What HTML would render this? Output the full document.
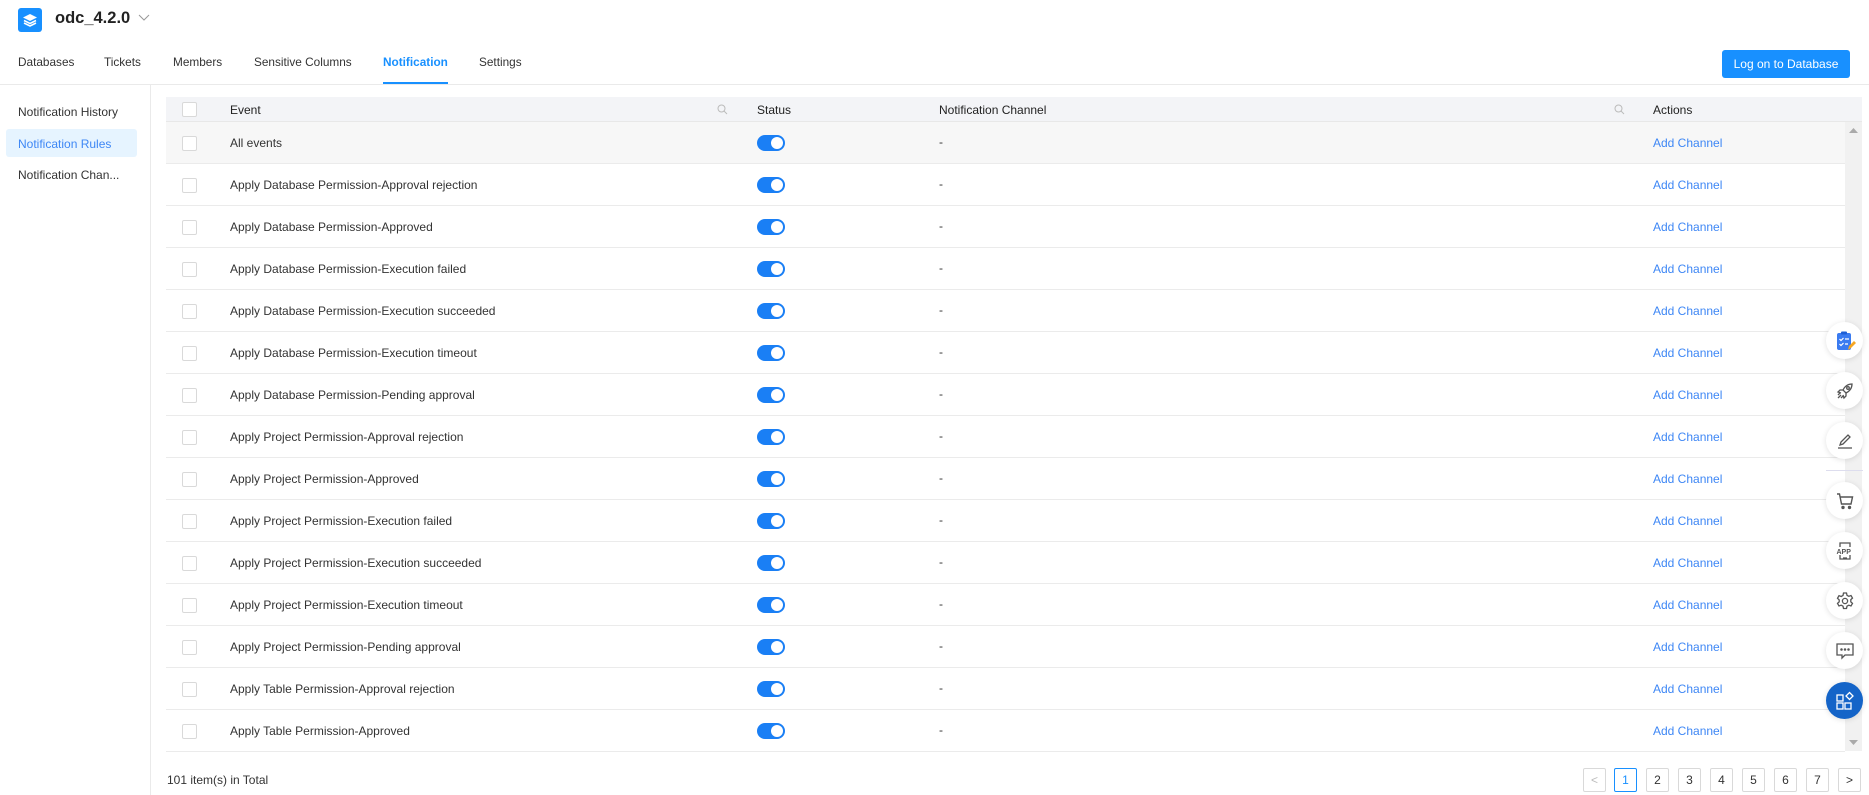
<!DOCTYPE html>
<html><head><meta charset="utf-8">
<style>
*{box-sizing:border-box;margin:0;padding:0}
body{width:1869px;height:795px;overflow:hidden;background:#fff;font-family:"Liberation Sans",sans-serif;font-size:12px;color:#333;position:relative}
.a{position:absolute;white-space:nowrap}
.tab{position:absolute;top:55px;font-size:11.8px;color:#333}
.row{position:absolute;left:166px;width:1679px;height:42px;border-bottom:1px solid #ebebeb}
.cb{position:absolute;left:16px;top:14px;width:15px;height:15px;border:1px solid #d9d9d9;border-radius:2px;background:#fff}
.ev{position:absolute;left:64px;top:14px}
.tg{position:absolute;left:591px;top:13px;width:28px;height:16px;border-radius:8px;background:#1a7ff5}
.tg:after{content:"";position:absolute;right:2px;top:2px;width:12px;height:12px;border-radius:50%;background:#fff}
.dash{position:absolute;left:773px;top:13px}
.ac{position:absolute;left:1487px;top:14px;color:#3e87f5}
.pg{position:absolute;top:768px;width:23px;height:24px;border:1px solid #d9d9d9;border-radius:2px;text-align:center;line-height:22px;font-size:12px;color:#333;background:#fff}
.fb{position:absolute;left:1826px;width:37px;height:37px;border-radius:50%;background:#fff;box-shadow:0 1px 6px rgba(0,0,0,.12);display:flex;align-items:center;justify-content:center}
</style></head><body>
<div class="a" style="left:18px;top:8px;width:24px;height:24px;background:#1890ff;border-radius:3px"></div>
<svg class="a" style="left:22px;top:13px" width="16" height="14" viewBox="0 0 16 14"><path d="M8 1L15 4.5 8 8 1 4.5Z" fill="#fff"/><path d="M2 7.5L8 10.5 14 7.5" stroke="#fff" stroke-width="1.6" fill="none"/><path d="M2 10L8 13 14 10" stroke="#fff" stroke-width="1.6" fill="none"/></svg>
<div class="a" style="left:55px;top:9px;font-size:16.5px;font-weight:bold;color:#222">odc_4.2.0</div>
<svg class="a" style="left:138px;top:14px" width="12" height="8"><path d="M1 1L6 6 11 1" stroke="#999" fill="none"/></svg>
<div class="tab" style="left:18px">Databases</div>
<div class="tab" style="left:104px">Tickets</div>
<div class="tab" style="left:173px">Members</div>
<div class="tab" style="left:254px">Sensitive Columns</div>
<div class="tab" style="left:383px;color:#1890ff;font-weight:bold">Notification</div>
<div class="tab" style="left:479px">Settings</div>
<div class="a" style="left:383px;top:82px;width:65px;height:2px;background:#1890ff"></div>
<div class="a" style="left:0;top:84px;width:1869px;height:1px;background:#eaeaea"></div>
<div class="a" style="left:1722px;top:50px;width:128px;height:28px;background:#1890ff;border-radius:3px;color:#fff;font-size:12px;text-align:center;line-height:28px">Log on to Database</div>
<div class="a" style="left:150px;top:85px;width:1px;height:710px;background:#eaeaea"></div>
<div class="a" style="left:18px;top:105px">Notification History</div>
<div class="a" style="left:6px;top:129px;width:131px;height:28px;background:#e6f4ff;border-radius:3px"></div>
<div class="a" style="left:18px;top:137px;color:#3e87f5">Notification Rules</div>
<div class="a" style="left:18px;top:168px">Notification Chan...</div>
<div class="a" style="left:166px;top:97px;width:1696px;height:25px;background:#f3f4f7;border-bottom:1px solid #e8e8e8"></div>
<div class="a" style="left:182px;top:102px;width:15px;height:15px;border:1px solid #d9d9d9;border-radius:2px;background:#fff"></div>
<div class="a" style="left:230px;top:103px;color:#222">Event</div>
<svg class="a" style="left:717px;top:104px" width="11" height="11"><circle cx="4.5" cy="4.5" r="3.5" stroke="#bbb" fill="none"/><path d="M7 7L10 10" stroke="#bbb"/></svg>
<div class="a" style="left:757px;top:103px;color:#222">Status</div>
<div class="a" style="left:939px;top:103px;color:#222">Notification Channel</div>
<svg class="a" style="left:1614px;top:104px" width="11" height="11"><circle cx="4.5" cy="4.5" r="3.5" stroke="#bbb" fill="none"/><path d="M7 7L10 10" stroke="#bbb"/></svg>
<div class="a" style="left:1653px;top:103px;color:#222">Actions</div>
<div class="a" style="left:1845px;top:122px;width:17px;height:629px;background:#f1f1f1"></div>
<svg class="a" style="left:1849px;top:128px" width="9" height="6"><path d="M0 5L4.5 0 9 5Z" fill="#aaa"/></svg>
<svg class="a" style="left:1849px;top:740px" width="9" height="6"><path d="M0 0L4.5 5 9 0Z" fill="#aaa"/></svg>
<div class="row" style="top:122px;background:#f7f7f7"><div class="cb"></div><div class="ev">All events</div><div class="tg"></div><div class="dash">-</div><div class="ac">Add Channel</div></div>
<div class="row" style="top:164px"><div class="cb"></div><div class="ev">Apply Database Permission-Approval rejection</div><div class="tg"></div><div class="dash">-</div><div class="ac">Add Channel</div></div>
<div class="row" style="top:206px"><div class="cb"></div><div class="ev">Apply Database Permission-Approved</div><div class="tg"></div><div class="dash">-</div><div class="ac">Add Channel</div></div>
<div class="row" style="top:248px"><div class="cb"></div><div class="ev">Apply Database Permission-Execution failed</div><div class="tg"></div><div class="dash">-</div><div class="ac">Add Channel</div></div>
<div class="row" style="top:290px"><div class="cb"></div><div class="ev">Apply Database Permission-Execution succeeded</div><div class="tg"></div><div class="dash">-</div><div class="ac">Add Channel</div></div>
<div class="row" style="top:332px"><div class="cb"></div><div class="ev">Apply Database Permission-Execution timeout</div><div class="tg"></div><div class="dash">-</div><div class="ac">Add Channel</div></div>
<div class="row" style="top:374px"><div class="cb"></div><div class="ev">Apply Database Permission-Pending approval</div><div class="tg"></div><div class="dash">-</div><div class="ac">Add Channel</div></div>
<div class="row" style="top:416px"><div class="cb"></div><div class="ev">Apply Project Permission-Approval rejection</div><div class="tg"></div><div class="dash">-</div><div class="ac">Add Channel</div></div>
<div class="row" style="top:458px"><div class="cb"></div><div class="ev">Apply Project Permission-Approved</div><div class="tg"></div><div class="dash">-</div><div class="ac">Add Channel</div></div>
<div class="row" style="top:500px"><div class="cb"></div><div class="ev">Apply Project Permission-Execution failed</div><div class="tg"></div><div class="dash">-</div><div class="ac">Add Channel</div></div>
<div class="row" style="top:542px"><div class="cb"></div><div class="ev">Apply Project Permission-Execution succeeded</div><div class="tg"></div><div class="dash">-</div><div class="ac">Add Channel</div></div>
<div class="row" style="top:584px"><div class="cb"></div><div class="ev">Apply Project Permission-Execution timeout</div><div class="tg"></div><div class="dash">-</div><div class="ac">Add Channel</div></div>
<div class="row" style="top:626px"><div class="cb"></div><div class="ev">Apply Project Permission-Pending approval</div><div class="tg"></div><div class="dash">-</div><div class="ac">Add Channel</div></div>
<div class="row" style="top:668px"><div class="cb"></div><div class="ev">Apply Table Permission-Approval rejection</div><div class="tg"></div><div class="dash">-</div><div class="ac">Add Channel</div></div>
<div class="row" style="top:710px"><div class="cb"></div><div class="ev">Apply Table Permission-Approved</div><div class="tg"></div><div class="dash">-</div><div class="ac">Add Channel</div></div>
<div class="a" style="left:167px;top:773px">101 item(s) in Total</div>
<div class="pg" style="left:1583px;color:#bbb">&lt;</div>
<div class="pg" style="left:1614px;border-color:#1890ff;color:#1890ff">1</div>
<div class="pg" style="left:1646px">2</div>
<div class="pg" style="left:1678px">3</div>
<div class="pg" style="left:1710px">4</div>
<div class="pg" style="left:1742px">5</div>
<div class="pg" style="left:1774px">6</div>
<div class="pg" style="left:1806px">7</div>
<div class="pg" style="left:1838px">&gt;</div>
<div class="fb" style="top:322px"><svg width="22" height="22" viewBox="0 0 22 22"><rect x="3" y="3" width="14" height="17" rx="2" fill="#3a7bf0"/><rect x="7" y="1.5" width="6" height="3" rx="1" fill="#1d5fd6"/><path d="M5.5 9l1.5 1.5 2.5-2.5M11 9h4M5.5 14l1.5 1.5 2.5-2.5M11 14h3" stroke="#fff" stroke-width="1.2" fill="none"/><path d="M14 20l1-4 5-5 2 2-5 5z" fill="#f5a623"/></svg></div>
<div class="fb" style="top:372px"><svg width="20" height="20" viewBox="0 0 20 20" fill="none" stroke="#555" stroke-width="1.3"><path d="M17 3c-4 0-7 2-9 6l3 3c4-2 6-5 6-9z"/><circle cx="13" cy="7" r="1.3"/><path d="M8 9H5l-2 2 3 1M11 12v3l-2 2-1-3M6 14l-3 3M5 12l-2 2M8 15l-2 2"/></svg></div>
<div class="fb" style="top:422px"><svg width="20" height="20" viewBox="0 0 20 20" fill="none" stroke="#555" stroke-width="1.3"><path d="M5 14l1-3 7-7 2 2-7 7z"/><path d="M3 17h14"/></svg></div>
<div class="a" style="left:1826px;top:470px;width:37px;height:1px;background:#dde"></div>
<div class="fb" style="top:482px"><svg width="20" height="20" viewBox="0 0 20 20" fill="none" stroke="#555" stroke-width="1.4"><path d="M2 3h2.5l2 10h9.5l1.5-7H5.2"/><circle cx="8" cy="16.5" r="1" fill="#555"/><circle cx="14.5" cy="16.5" r="1" fill="#555"/></svg></div>
<div class="fb" style="top:532px"><svg width="20" height="22" viewBox="0 0 20 22" fill="none" stroke="#555" stroke-width="1.3"><path d="M5 7V3h10v4M5 15v4h10v-4"/><path d="M8 18h4"/><text x="1.5" y="14" font-size="7" font-family="Liberation Sans" fill="#555" stroke="none" font-weight="bold">APP</text></svg></div>
<div class="fb" style="top:582px"><svg width="20" height="20" viewBox="0 0 20 20" fill="none" stroke="#555" stroke-width="1.3"><path d="M8.5 2h3l.5 2.3 1.8 1 2.2-.8 1.5 2.6-1.7 1.6v2.1l1.7 1.6-1.5 2.6-2.2-.8-1.8 1-.5 2.300h-3l-.5-2.3-1.8-1-2.2.8-1.5-2.6 1.7-1.6V8.9L2.5 7.3 4 4.7l2.2.8 1.8-1z"/><circle cx="10" cy="10" r="2.6"/></svg></div>
<div class="fb" style="top:632px"><svg width="20" height="20" viewBox="0 0 20 20" fill="none" stroke="#555" stroke-width="1.3"><path d="M2 3h16v11h-8l-3 3v-3H2z"/><circle cx="6.5" cy="8.5" r=".6" fill="#555"/><circle cx="10" cy="8.5" r=".6" fill="#555"/><circle cx="13.5" cy="8.5" r=".6" fill="#555"/></svg></div>
<div class="fb" style="top:682px;background:#1464c8"><svg width="20" height="20" viewBox="0 0 20 20" fill="none" stroke="#fff" stroke-width="1.3"><rect x="2" y="4" width="6" height="6"/><rect x="2" y="12" width="6" height="6"/><rect x="10" y="12" width="6" height="6"/><path d="M14.5 1.5l3.5 3.5-3.5 3.5-3.5-3.5z"/></svg></div>
</body></html>
